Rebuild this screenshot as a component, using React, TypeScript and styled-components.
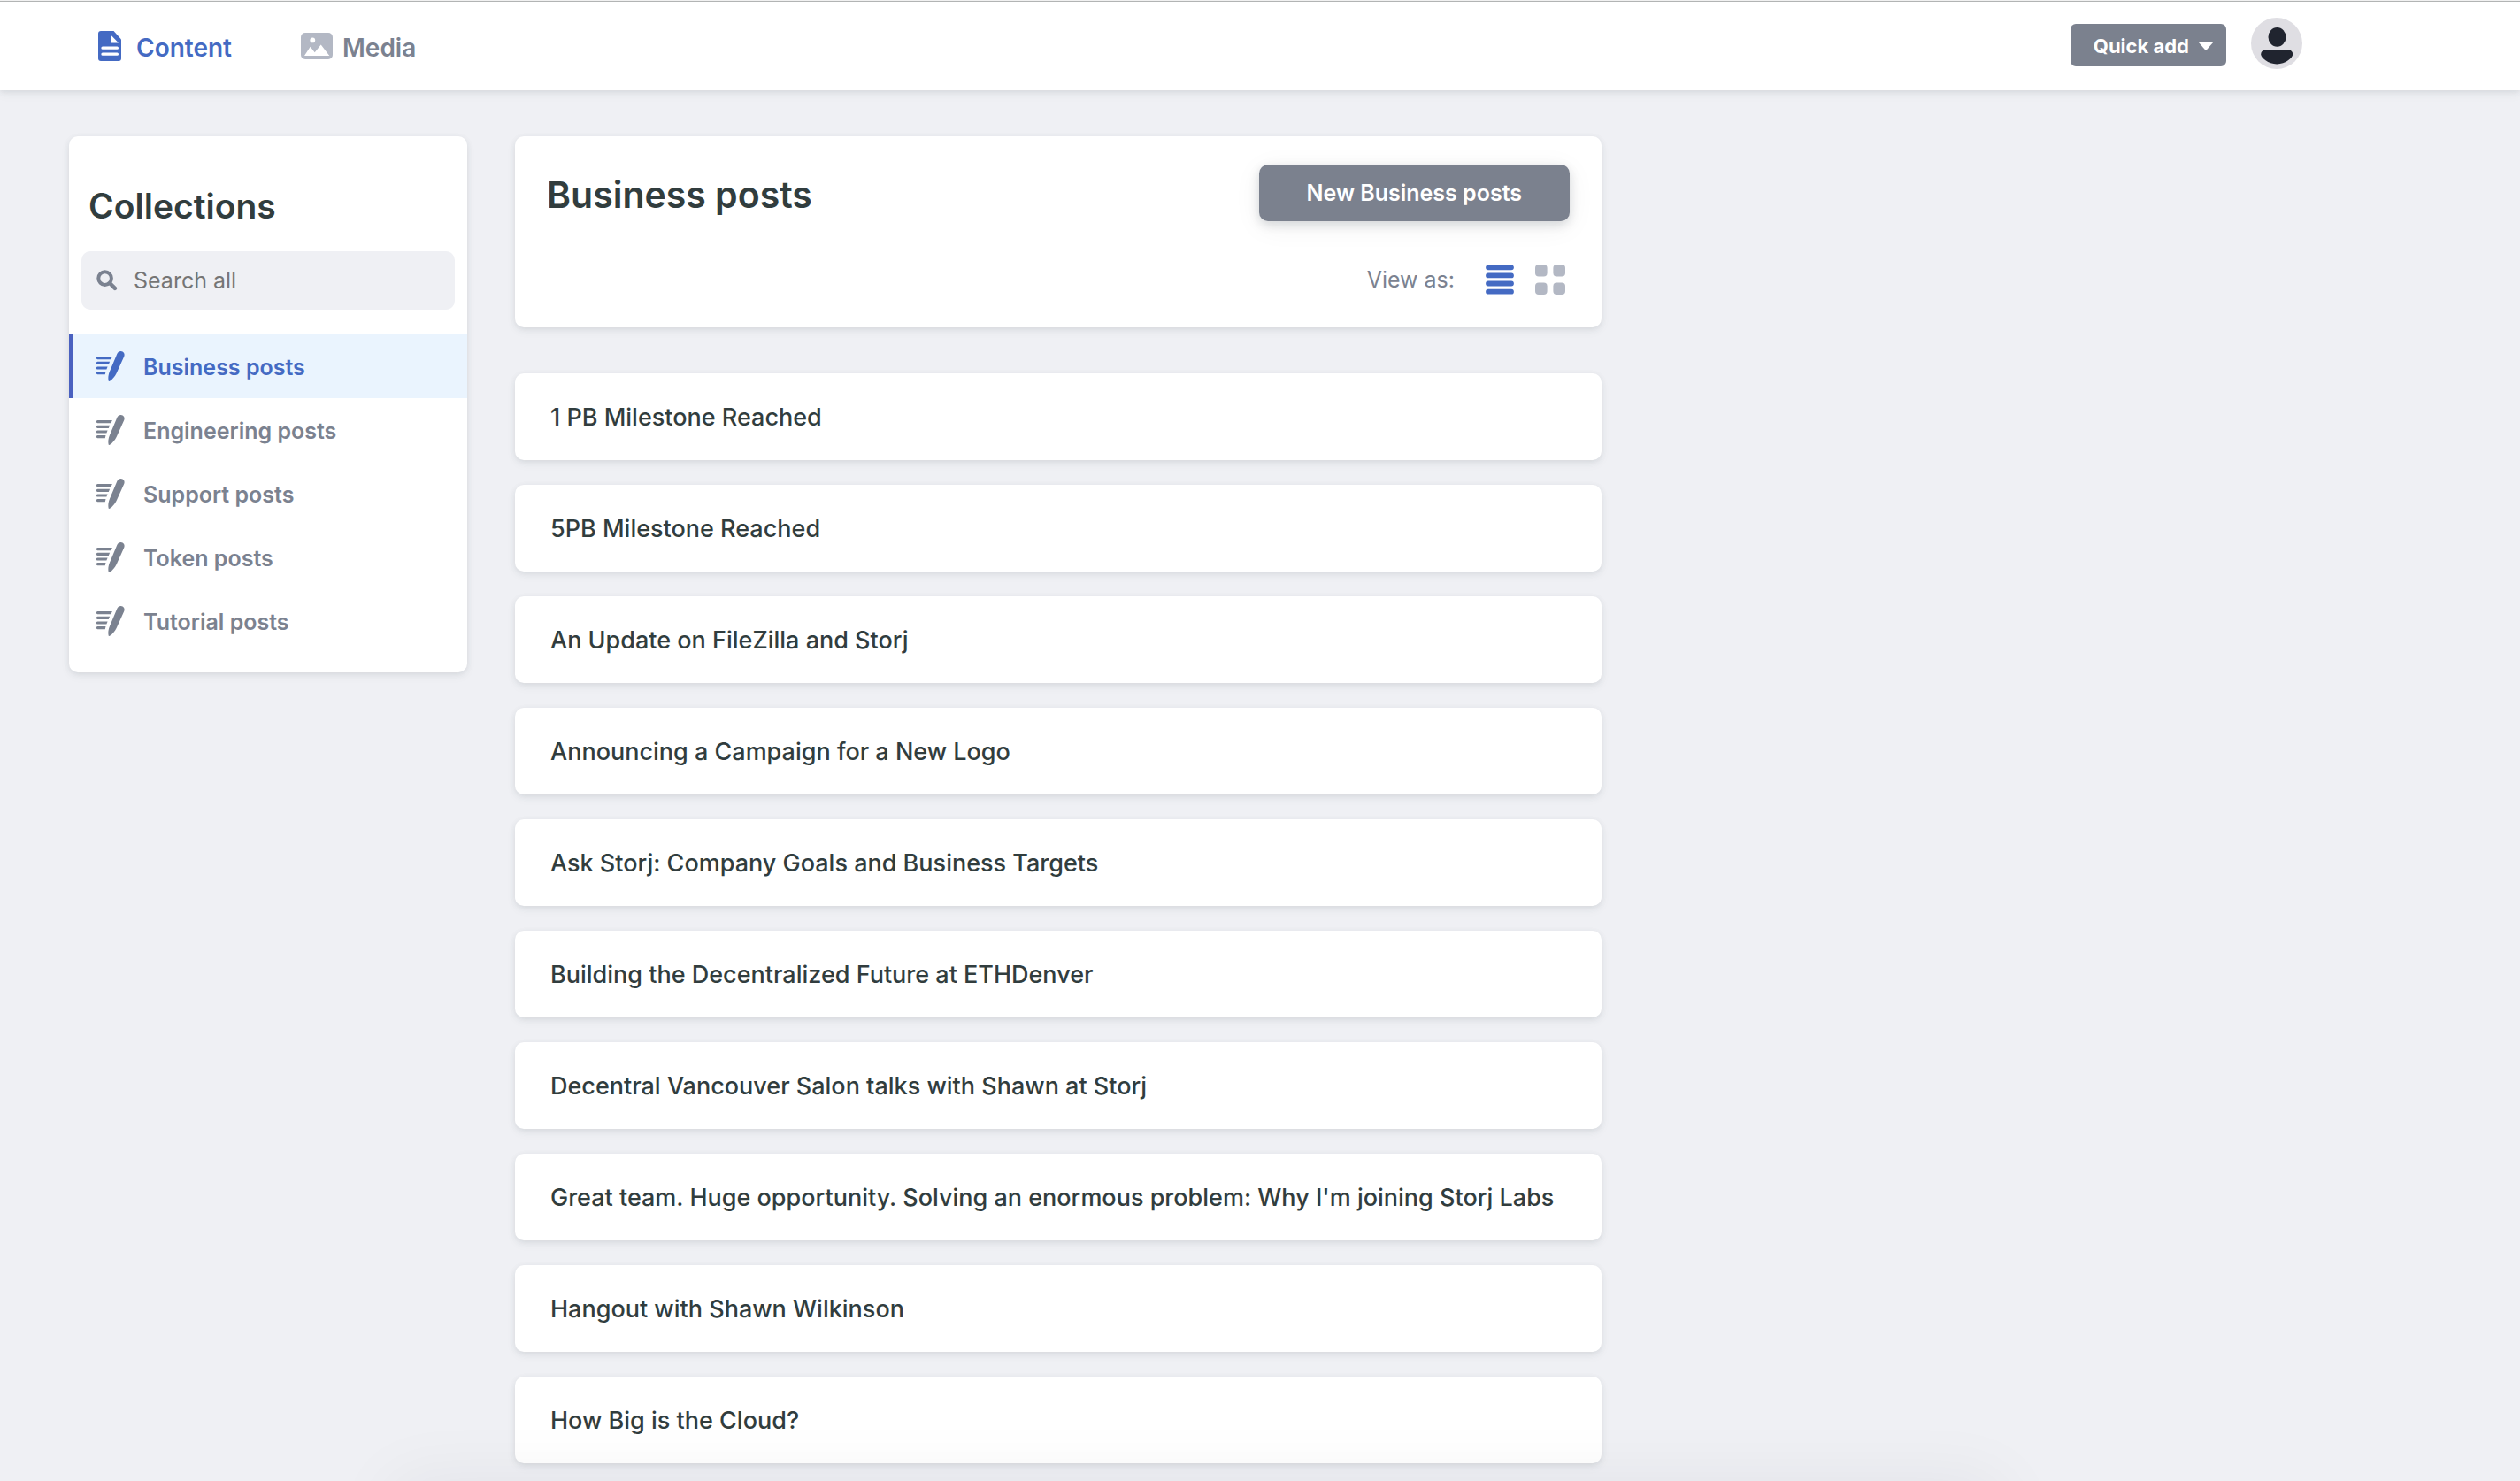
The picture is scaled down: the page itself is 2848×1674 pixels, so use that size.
import React, { useState } from "react";
import styled, { createGlobalStyle } from "styled-components";

const color = {
  page: "#eff0f4",
  surface: "#ffffff",
  text: "#7b8290",
  heading: "#313d3e",
  active: "#446ac3",
  activeEdge: "#4a61c0",
  activeTint: "#eaf4fe",
  button: "#7b818e",
  muted: "#b3b8c4",
  placeholder: "#757575",
};

const GlobalStyle = createGlobalStyle`
  *, *::before, *::after { box-sizing: border-box; }
  body {
    margin: 0;
    background: ${color.page};
    color: ${color.text};
    font-family: Inter, "Liberation Sans", sans-serif;
    font-size: 25px;
    line-height: 38px;
  }
  button, input { font: inherit; color: inherit; }
  button { border: 0; padding: 0; background: none; cursor: pointer; }
  h1, h2, ul { margin: 0; padding: 0; }
  ul { list-style: none; }
  a { color: inherit; text-decoration: none; }
  svg { display: block; flex: none; }
`;

const cardShadow = "0 4px 12px rgba(68, 74, 87, 0.05), 0 2px 6px rgba(68, 74, 87, 0.1)";

const Page = styled.div`
  height: 100vh;
  overflow: hidden;
  &::after {
    content: "";
    position: fixed;
    left: 17%;
    right: 22%;
    bottom: -60px;
    height: 20px;
    box-shadow: 0 0 80px 40px rgba(30, 34, 44, 0.06);
    pointer-events: none;
  }
`;

const Header = styled.header`
  background: ${color.surface};
  box-shadow: inset 0 1px #f1f1f1, inset 0 2px #b2b4b4, ${cardShadow};
`;

const HeaderInner = styled.div`
  display: flex;
  align-items: center;
  justify-content: space-between;
  max-width: 2602px;
  height: 102px;
  padding-left: 111px;
`;

const Nav = styled.nav`
  display: flex;
  align-items: center;
  gap: 78px;
`;

const NavLink = styled.a<{ $active?: boolean; $gap: number }>`
  display: flex;
  align-items: center;
  gap: ${(p) => p.$gap}px;
  padding-top: 2px;
  font-size: 28px;
  font-weight: 600;
  color: ${(p) => (p.$active ? color.active : color.text)};
  svg { color: ${(p) => (p.$active ? color.active : color.muted)}; }
`;

const NavText = styled.span`
  padding-top: 3px;
`;

const Actions = styled.div`
  display: flex;
  align-items: center;
  gap: 28px;
`;

const QuickAdd = styled.button`
  display: flex;
  align-items: center;
  justify-content: space-between;
  gap: 11px;
  height: 48px;
  padding: 2px 15px 0 26px;
  border-radius: 6px;
  background: ${color.button};
  color: #fff;
  font-size: 22px;
  font-weight: 700;
  white-space: nowrap;
`;

const Avatar = styled.button`
  padding-bottom: 4px;
`;

const Body = styled.div`
  display: flex;
  align-items: flex-start;
  gap: 54px;
  padding: 52px 78px;
`;

const Card = styled.section`
  border-radius: 10px;
  background: ${color.surface};
  box-shadow: ${cardShadow};
`;

const Sidebar = styled(Card).attrs({ as: "aside" })`
  flex: none;
  width: 450px;
  padding: 54px 0 22px;
`;

const SidebarTitle = styled.h2`
  padding: 0 22px;
  font-size: 39px;
  line-height: 50px;
  font-weight: 600;
  color: ${color.heading};
`;

const SearchBox = styled.label`
  display: flex;
  align-items: center;
  gap: 18px;
  height: 66px;
  margin: 26px 14px 28px;
  padding: 0 17px;
  border-radius: 10px;
  background: ${color.page};
`;

const SearchInput = styled.input`
  flex: 1;
  min-width: 0;
  border: 0;
  padding: 0;
  outline: 0;
  background: none;
  &::placeholder { color: ${color.placeholder}; opacity: 1; }
`;

const CollectionLink = styled.a<{ $active?: boolean }>`
  display: flex;
  align-items: center;
  gap: 21px;
  height: 72px;
  padding: 0 27px;
  border-left: 4px solid ${(p) => (p.$active ? color.activeEdge : "transparent")};
  background: ${(p) => (p.$active ? color.activeTint : "transparent")};
  color: ${(p) => (p.$active ? color.active : color.text)};
  font-weight: 600;
`;

const CollectionName = styled.span`
  padding-top: 2px;
`;

const Main = styled.main`
  flex: 1;
  min-width: 0;
  max-width: 1228px;
`;

const Top = styled(Card)`
  display: flex;
  flex-direction: column;
  gap: 47px;
  margin-bottom: 52px;
  padding: 32px 36px 35px;
`;

const TopRow = styled.div`
  display: flex;
  align-items: center;
  justify-content: space-between;
`;

const Title = styled.h1`
  padding-top: 4px;
  font-size: 41px;
  line-height: 50px;
  font-weight: 600;
  color: ${color.heading};
`;

const NewButton = styled.button`
  height: 64px;
  padding: 0 54px;
  border-radius: 10px;
  background: ${color.button};
  box-shadow: 0 4px 12px rgba(14, 30, 37, 0.15), 0 6px 32px rgba(14, 30, 37, 0.06);
  color: #fff;
  font-weight: 600;
  white-space: nowrap;
`;

const ViewControls = styled.div`
  display: flex;
  align-items: center;
  justify-content: flex-end;
  gap: 24px;
  padding-right: 5px;
`;

const ViewLabel = styled.span`
  margin-right: 11px;
`;

const ViewButton = styled.button<{ $active: boolean }>`
  color: ${(p) => (p.$active ? color.active : color.muted)};
`;

const Entries = styled.ul`
  display: flex;
  flex-direction: column;
  gap: 28px;
`;

const Entry = styled(Card).attrs({ as: "li" })``;

const EntryLink = styled.a`
  display: block;
  padding: 31px 40px 29px;
  color: ${color.heading};
  font-weight: 500;
  font-size: 27px;
  white-space: nowrap;
`;

const DocIcon = () => (
  <svg width="26" height="34" viewBox="0 0 26 34" aria-hidden="true">
    <path d="M3 0h14.500l8.500 9.500V31a3 3 0 0 1-3 3H3a3 3 0 0 1-3-3V3a3 3 0 0 1 3-3z" fill="currentColor" />
    <path d="M14 4.300v9.200h9z" fill="#fff" />
    <path d="M5 19.200h16.400M5 26.200h16.400" stroke="#fff" strokeWidth="3.300" strokeLinecap="round" />
  </svg>
);

const MediaIcon = () => (
  <svg width="36" height="30" viewBox="0 0 36 30" aria-hidden="true">
    <rect width="36" height="30" rx="5" fill="currentColor" />
    <circle cx="13.300" cy="8.400" r="2.900" fill="#fff" />
    <path d="M4 26l6.700-10.200 5 6.500 7-8.700L32.300 26z" fill="#fff" />
  </svg>
);

const CaretIcon = () => (
  <svg width="16" height="10" viewBox="0 0 16 10" aria-hidden="true">
    <path d="M1 0h14q1.300.2.600 1.400L8.700 9.500q-.7.700-1.400 0L.4 1.400Q-.3.200 1 0z" fill="currentColor" />
  </svg>
);

const AvatarIcon = () => (
  <svg width="58" height="58" viewBox="0 0 58 58" aria-hidden="true">
    <circle cx="29" cy="29" r="29" fill="#dfdee3" />
    <ellipse cx="29.500" cy="21.900" rx="10" ry="10.900" fill="#20242f" />
    <path
      d="M17 36.300h24.500c3.600 0 5.700 2 5.700 5.200 0 3.700-8.200 10.900-18 10.900S11.200 45.200 11.200 41.500c0-3.200 2.200-5.200 5.800-5.200z"
      fill="#20242f"
    />
  </svg>
);

const SearchIcon = () => (
  <svg width="24" height="24" viewBox="0 0 24 24" fill="none" stroke="#7b8290" aria-hidden="true">
    <circle cx="9.600" cy="9.600" r="7.300" strokeWidth="4" />
    <path d="M15.300 15.300l5.600 5.600" strokeWidth="4.400" strokeLinecap="round" />
  </svg>
);

const WriteIcon = () => (
  <svg width="32" height="34" viewBox="0 0 32 34" fill="currentColor" aria-hidden="true">
    <path d="M1.500 6h16.400l-1.500 3.200H1.500a1.600 1.600 0 0 1 0-3.200zM1.500 11.800h13.600l-1.300 3.200H1.500a1.600 1.600 0 0 1 0-3.200zM1.500 17.400h11.100l-1.200 3.200H1.500a1.600 1.600 0 0 1 0-3.200zM1.500 23h9l-.7 3.200H1.500a1.600 1.600 0 0 1 0-3.200z" />
    <path d="M13.700 33.500c-.8-3.800-.2-7 1.200-10.600L23.300 3c1.100-2.700 4-3.700 6.300-2.500 2 1.100 2.500 3.400 1.500 5.800L22.600 25c-1.900 3.900-4.600 6.800-7.600 8.800-.8.400-1.200.3-1.300-.3z" />
  </svg>
);

const ListIcon = () => (
  <svg width="32" height="34" viewBox="0 0 32 34" aria-hidden="true">
    <path d="M3 3.300h26M3 12.400h26M3 21.500h26M3 30.700h26" stroke="currentColor" strokeWidth="5.800" strokeLinecap="round" />
  </svg>
);

const GridIcon = () => (
  <svg width="34" height="34" viewBox="0 0 34 34" fill="currentColor" aria-hidden="true">
    <rect width="13.600" height="13.600" rx="4" />
    <rect x="20.400" width="13.600" height="13.600" rx="4" />
    <rect y="20.400" width="13.600" height="13.600" rx="4" />
    <rect x="20.400" y="20.400" width="13.600" height="13.600" rx="4" />
  </svg>
);

const collections = ["Business posts", "Engineering posts", "Support posts", "Token posts", "Tutorial posts"];

const entries = [
  "1 PB Milestone Reached",
  "5PB Milestone Reached",
  "An Update on FileZilla and Storj",
  "Announcing a Campaign for a New Logo",
  "Ask Storj: Company Goals and Business Targets",
  "Building the Decentralized Future at ETHDenver",
  "Decentral Vancouver Salon talks with Shawn at Storj",
  "Great team. Huge opportunity. Solving an enormous problem: Why I'm joining Storj Labs",
  "Hangout with Shawn Wilkinson",
  "How Big is the Cloud?",
];

export default function App() {
  const [view, setView] = useState<"list" | "grid">("list");
  return (
    <Page>
      <GlobalStyle />
      <Header>
        <HeaderInner>
          <Nav>
            <NavLink href="#content" $active $gap={17}>
              <DocIcon />
              <NavText>Content</NavText>
            </NavLink>
            <NavLink href="#media" $gap={11}>
              <MediaIcon />
              <NavText>Media</NavText>
            </NavLink>
          </Nav>
          <Actions>
            <QuickAdd type="button">
              Quick add
              <CaretIcon />
            </QuickAdd>
            <Avatar type="button" aria-label="Account">
              <AvatarIcon />
            </Avatar>
          </Actions>
        </HeaderInner>
      </Header>
      <Body>
        <Sidebar>
          <SidebarTitle>Collections</SidebarTitle>
          <SearchBox>
            <SearchIcon />
            <SearchInput placeholder="Search all" aria-label="Search all" />
          </SearchBox>
          <ul>
            {collections.map((name, i) => (
              <li key={name}>
                <CollectionLink href="#collection" $active={i === 0}>
                  <WriteIcon />
                  <CollectionName>{name}</CollectionName>
                </CollectionLink>
              </li>
            ))}
          </ul>
        </Sidebar>
        <Main>
          <Top>
            <TopRow>
              <Title>Business posts</Title>
              <NewButton type="button">New Business posts</NewButton>
            </TopRow>
            <ViewControls>
              <ViewLabel>View as:</ViewLabel>
              <ViewButton type="button" aria-label="List view" $active={view === "list"} onClick={() => setView("list")}>
                <ListIcon />
              </ViewButton>
              <ViewButton type="button" aria-label="Grid view" $active={view === "grid"} onClick={() => setView("grid")}>
                <GridIcon />
              </ViewButton>
            </ViewControls>
          </Top>
          <Entries>
            {entries.map((title) => (
              <Entry key={title}>
                <EntryLink href="#entry">{title}</EntryLink>
              </Entry>
            ))}
          </Entries>
        </Main>
      </Body>
    </Page>
  );
}
